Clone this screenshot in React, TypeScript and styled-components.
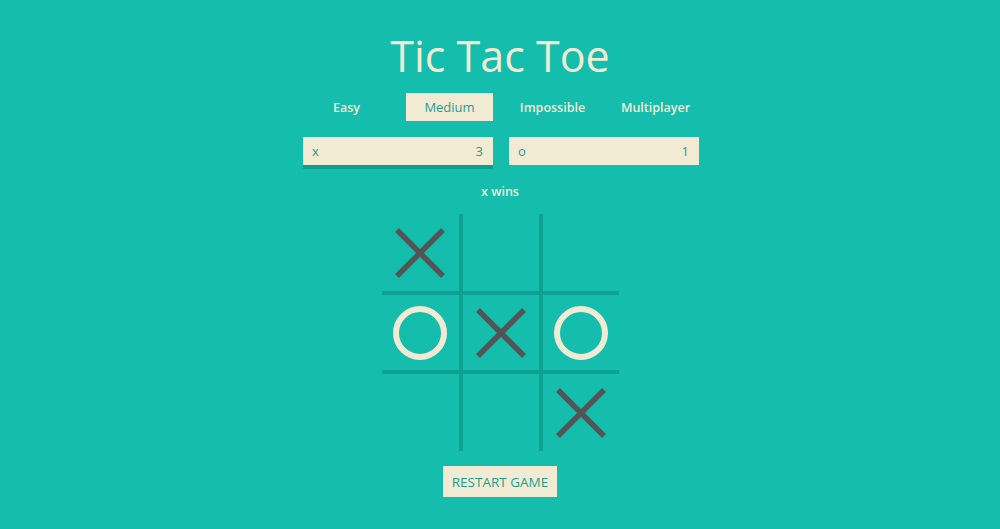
import React from "react";
import styled, { createGlobalStyle } from "styled-components";

const GlobalStyle = createGlobalStyle`
  html, body {
    margin: 0;
    padding: 0;
    background: #14bdac;
    font-family: "Open Sans", "Liberation Sans", sans-serif;
  }
  * { box-sizing: border-box; }
`;

const Page = styled.div`
  width: 1000px;
  height: 529px;
  display: flex;
  flex-direction: column;
  align-items: center;
  padding-top: 31px;
  background: #14bdac;
  overflow: hidden;
`;

const Title = styled.h1`
  margin: 0;
  font-size: 43px;
  line-height: 50px;
  font-weight: 400;
  color: #f2ebd3;
`;

const Tabs = styled.div`
  margin-top: 12px;
  width: 396px;
  display: flex;
  justify-content: space-between;
  transform: translateX(1px);
`;

const Tab = styled.div<{ $active?: boolean }>`
  width: 87px;
  height: 28px;
  line-height: ${(p) => (p.$active ? "28px" : "30px")};
  text-align: center;
  font-size: ${(p) => (p.$active ? "13px" : "12.5px")};
  font-weight: ${(p) => (p.$active ? 400 : 600)};
  color: ${(p) => (p.$active ? "#1f9e90" : "#f2ebd3")};
  background: ${(p) => (p.$active ? "#f2ebd3" : "transparent")};
`;

const Scores = styled.div`
  margin-top: 16px;
  width: 396px;
  display: flex;
  justify-content: space-between;
  transform: translateX(1px);
`;

const ScoreBox = styled.div<{ $turn?: boolean }>`
  width: 190px;
  height: 28px;
  padding: 0 10px 0 9px;
  display: flex;
  align-items: center;
  justify-content: space-between;
  font-size: 13px;
  color: #1f9e90;
  background: #f2ebd3;
  box-shadow: ${(p) => (p.$turn ? "0 4px 0 #0e9f90" : "none")};
`;

const Status = styled.div`
  margin-top: 18px;
  font-size: 12.5px;
  line-height: 18px;
  font-weight: 600;
  color: #f2ebd3;
`;

const Board = styled.div`
  margin-top: 13px;
  display: grid;
  grid-template-columns: 77px 84px 76px;
  grid-template-rows: 77px 83px 77px;
`;

const Cell = styled.div<{ $midCol?: boolean; $midRow?: boolean }>`
  display: flex;
  align-items: center;
  justify-content: center;
  border-left: ${(p) => (p.$midCol ? "4px solid #0da192" : "none")};
  border-right: ${(p) => (p.$midCol ? "4px solid #0da192" : "none")};
  border-top: ${(p) => (p.$midRow ? "4px solid #0da192" : "none")};
  border-bottom: ${(p) => (p.$midRow ? "4px solid #0da192" : "none")};
`;

const RestartButton = styled.button`
  margin-top: 15px;
  width: 114px;
  height: 31px;
  border: none;
  padding: 0;
  background: #f2ebd3;
  color: #1f9e90;
  font-family: "Open Sans", "Liberation Sans", sans-serif;
  font-size: 13.5px;
  font-weight: 400;
  cursor: pointer;
`;

const XMark = () => (
  <svg width="52" height="52" viewBox="0 0 52 52">
    <line x1="3" y1="3" x2="49" y2="49" stroke="#545454" strokeWidth="5.5" />
    <line x1="49" y1="3" x2="3" y2="49" stroke="#545454" strokeWidth="5.5" />
  </svg>
);

const OMark = () => (
  <svg width="54" height="54" viewBox="0 0 54 54">
    <circle cx="27" cy="27" r="24" fill="none" stroke="#f2ebd3" strokeWidth="6" />
  </svg>
);

const board = ["x", "", "", "o", "x", "o", "", "", "x"];

export default function App() {
  return (
    <>
      <GlobalStyle />
      <Page>
        <Title>Tic Tac Toe</Title>
        <Tabs>
          <Tab>Easy</Tab>
          <Tab $active>Medium</Tab>
          <Tab>Impossible</Tab>
          <Tab>Multiplayer</Tab>
        </Tabs>
        <Scores>
          <ScoreBox $turn>
            <span>x</span>
            <span>3</span>
          </ScoreBox>
          <ScoreBox>
            <span>o</span>
            <span>1</span>
          </ScoreBox>
        </Scores>
        <Status>x wins</Status>
        <Board>
          {board.map((v, i) => (
            <Cell key={i} $midCol={i % 3 === 1} $midRow={Math.floor(i / 3) === 1}>
              {v === "x" ? <XMark /> : v === "o" ? <OMark /> : null}
            </Cell>
          ))}
        </Board>
        <RestartButton>RESTART GAME</RestartButton>
      </Page>
    </>
  );
}
